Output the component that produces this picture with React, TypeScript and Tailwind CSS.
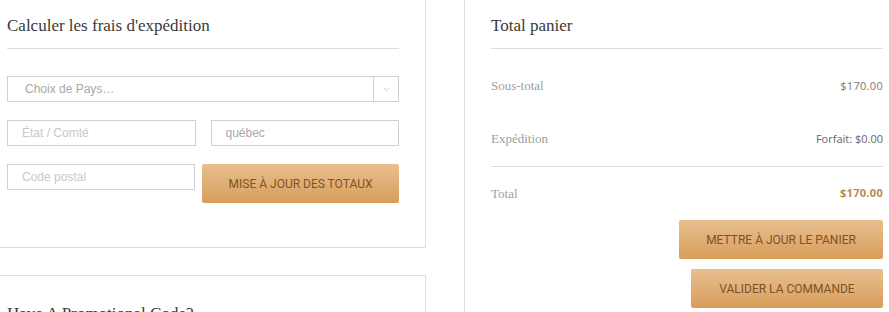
import React from "react";

const serif = { fontFamily: '"Liberation Serif", serif' };

function Btn({ label, w }: { label: string; w: string }) {
  return (
    <button
      className={`${w} h-[39px] shrink-0 rounded-[2px] bg-gradient-to-b from-[#e8bf8f] to-[#d89d5a] text-[12px] text-[#7d5227] uppercase`}
      style={{ fontFamily: "Roboto, sans-serif" }}
    >
      {label}
    </button>
  );
}

export default function App() {
  const input =
    "h-[26px] border border-[#d0d0d0] bg-white pl-[14px] text-[12px] flex items-center";
  return (
    <div
      className="w-[889px] h-[312px] overflow-hidden bg-white flex"
      style={{ fontFamily: '"Liberation Sans", Arial, sans-serif' }}
    >
      {/* Left column */}
      <div className="w-[426px] shrink-0 flex flex-col">
        <div className="h-[248px] shrink-0 border-r border-b border-[#dedede] pl-[7px] pr-[26px]">
          <div className="h-[49px] border-b border-[#dedede] pt-[16px]">
            <h2 className="text-[17px] leading-[20px] text-[#3a3a3a]" style={serif}>
              Calculer les frais d'expédition
            </h2>
          </div>
          <div className="mt-[27px] h-[26px] border border-[#d0d0d0] flex">
            <div className="flex-1 flex items-center pl-[17px] text-[12px] text-[#a8a8a8]">
              Choix de Pays…
            </div>
            <div className="w-[25px] border-l border-[#d0d0d0] flex items-center justify-center">
              <svg width="7" height="4" viewBox="0 0 7 4" fill="none">
                <path d="M0.5 0.5 L3.5 3.5 L6.5 0.5" stroke="#d0d0d0" strokeWidth="1" />
              </svg>
            </div>
          </div>
          <div className="mt-[18px] flex gap-[15px]">
            <div className={`${input} w-[189px] text-[#c8c8c8]`}>État / Comté</div>
            <div className={`${input} w-[189px] text-[#a8a8a8]`}>québec</div>
          </div>
          <div className="mt-[18px] flex gap-[7px] items-start">
            <div className={`${input} w-[189px] text-[#c8c8c8]`}>Code postal</div>
            <Btn label="Mise à jour des totaux" w="w-[197px]" />
          </div>
        </div>
        <div className="mt-[27px] h-[80px] shrink-0 border-t border-r border-[#dedede] pl-[7px] pt-[28px]">
          <h2 className="text-[17px] leading-[20px] text-[#3a3a3a]" style={serif}>
            Have A Promotional Code?
          </h2>
        </div>
      </div>

      {/* Right column */}
      <div className="ml-[38px] border-l border-[#dedede] pl-[26px] w-[420px] shrink-0">
        <div className="w-[392px]">
          <div className="h-[49px] border-b border-[#dedede] pt-[16px]">
            <h2 className="text-[17px] leading-[20px] text-[#3a3a3a]" style={serif}>
              Total panier
            </h2>
          </div>
          <div className="mt-[11px] h-[52px] flex items-center justify-between">
            <span className="text-[13px] text-[#a0a0a0]" style={serif}>Sous-total</span>
            <span className="text-[11px] text-[#777] tracking-[0.3px]" style={{ fontFamily: '"Open Sans", sans-serif' }}>
              $170.00
            </span>
          </div>
          <div className="h-[55px] border-b border-[#dedede] flex items-center justify-between">
            <span className="text-[13px] text-[#a0a0a0]" style={serif}>Expédition</span>
            <span className="text-[11px] text-[#666]" style={{ fontFamily: '"Open Sans", sans-serif' }}>
              Forfait: $0.00
            </span>
          </div>
          <div className="h-[53px] flex items-center justify-between">
            <span className="text-[13px] text-[#a0a0a0]" style={serif}>Total</span>
            <span className="text-[11px] font-bold text-[#b8894f] tracking-[0.3px]" style={{ fontFamily: '"Open Sans", sans-serif' }}>
              $170.00
            </span>
          </div>
          <div className="flex flex-col items-end gap-[10px]">
            <Btn label="Mettre à jour le panier" w="w-[204px]" />
            <Btn label="Valider la commande" w="w-[192px]" />
          </div>
        </div>
      </div>
    </div>
  );
}
